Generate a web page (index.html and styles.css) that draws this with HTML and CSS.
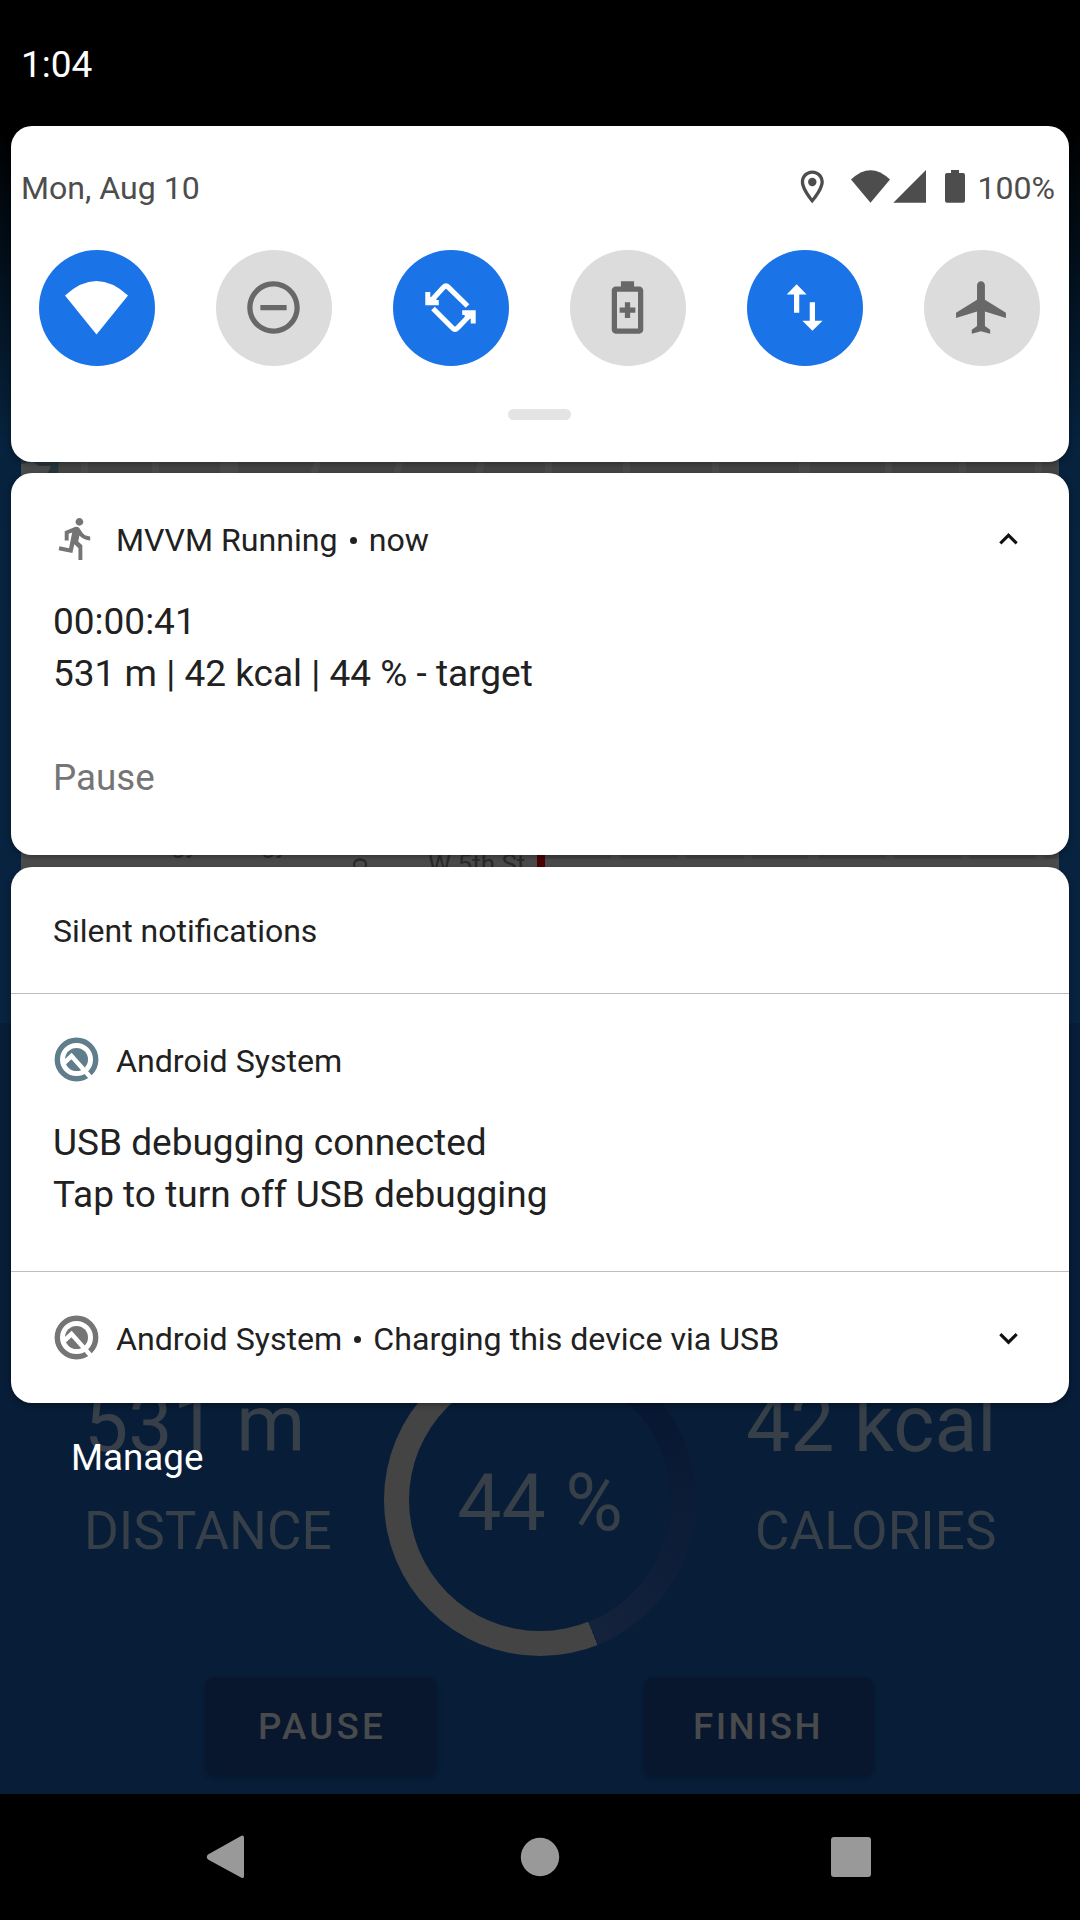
FILE: index.html
```html
<!DOCTYPE html>
<html lang="en">
<head>
<meta charset="utf-8">
<title>Notification shade</title>
<link rel="stylesheet" href="styles.css">
</head>
<body>
<div class="screen">
  <div class="app">
    <div class="map">
      <svg class="map-art" viewBox="0 0 1038 623" width="1038" height="623">
        <rect width="1038" height="623" fill="#454545"/>
        <g fill="#4c4c4c">
          <path d="M60 58h7v20h-7zM131 58h7v20h-7zM199 58h18v20h-18zM294 58h7l-6 20h-7zM377 58h7l-6 20h-7zM458 58h7l-5 20h-7zM524 58h7v20h-7zM602 58h7v20h-7zM691 58h7v20h-7zM778 58h11v20h-11zM864 58h7v20h-7zM938 58h7v20h-7zM1014 58h7v20h-7z"/>
          <path d="M0 459h1038v15H0zM0 450h516v12H0zM590 445h9v14h-9zM657 445h8v14h-8zM723 445h8v14h-8zM787 445h11v14h-11zM865 445h8v14h-8zM940 445h8v14h-8zM1015 445h8v14h-8z"/>
        </g>
        <path d="M0 50H36Q39 66 36 76H0z" fill="#29363d"/>
        <path d="M0 64L12 62L18 66L30 66L28 71L24 75H0z" fill="#4a4c4c"/>
        <rect x="516" y="440" width="8" height="34" fill="#4b0000"/>
        <g class="map-label">
          <text x="407" y="473">W 5th St</text>
          <text x="150" y="453">gy</text>
          <text x="240" y="453">gy</text>
          <text transform="translate(346 472) rotate(-90)">o</text>
        </g>
      </svg>
    </div>
    <div class="stats">
      <div class="stat stat-left"><div class="value">531 m</div><div class="label">DISTANCE</div></div>
      <div class="ring">
        <div class="ring-core">44 %</div>
      </div>
      <div class="stat stat-right"><div class="value">42 kcal</div><div class="label">CALORIES</div></div>
    </div>
    <div class="actions">
      <div class="action">PAUSE</div>
      <div class="action action-finish">FINISH</div>
    </div>
  </div>

  <div class="shade">
    <div class="clock">1:04</div>
    <section class="card quick">
      <div class="quick-top">
        <span class="date">Mon, Aug 10</span>
        <svg class="status-icons" viewBox="800 168 168 36" width="168" height="36" fill="#4d4d4d">
          <path fill-rule="evenodd" d="M813.3 170.5C806.8 170.5 801.8 175.600 801.8 182C801.8 190.5 813.3 203.300 813.3 203.300S824.800 190.500 824.800 182C824.800 175.600 819.800 170.500 813.300 170.500zM813.300 173.700C818 173.700 821.500 177.400 821.500 182C821.500 186.500 816.500 194 813.300 198.200C810.100 194 805.100 186.500 805.100 182C805.100 177.400 808.600 173.700 813.300 173.700z"/>
          <circle cx="813.300" cy="182" r="4.200"/>
          <path d="M852 179.500Q871.500 160.800 891 179.500L871.500 202.700z"/>
          <path d="M927 170V202.700H894.300z"/>
          <path d="M952 170h8v3h4q2 0 2 2v25.700q0 2-2 2h-16q-2 0-2-2V175q0-2 2-2h4z"/>
        </svg>
        <span class="percent">100%</span>
      </div>
      <div class="tiles">
        <div class="tile on"><svg viewBox="0 0 63 63" width="63" height="63"><path d="M0 19.500Q31.500-9.500 63 19.500L31.500 58.500z" fill="#fff"/></svg></div>
        <div class="tile"><svg viewBox="0 0 24 24" width="63" height="63" fill="#686868"><path d="M7 11h10v2H7zM12 2C6.480 2 2 6.480 2 12s4.480 10 10 10 10-4.480 10-10S17.520 2 12 2zm0 18c-4.410 0-8-3.590-8-8s3.590-8 8-8 8 3.590 8 8-3.590 8-8 8z"/></svg></div>
        <div class="tile on"><svg viewBox="0 0 63 63" width="63" height="63" fill="none" stroke="#fff" stroke-width="5.200"><path d="M12 25L24.500 11.300Q27 8.800 29.500 11.300L48.500 30M14 32.500L33.500 52Q36 54.500 38.500 52L53 37"/><path fill="#fff" stroke="none" d="M6.300 16h5v5l6 0v3h2.500v5.300H6.300zM56.700 47.500h-5V42.500l-6 0v-3.500h-2.500v-4.800h13.500z"/></svg></div>
        <div class="tile"><svg viewBox="0 0 24 24" width="63" height="63" fill="#686868"><path fill-rule="evenodd" d="M9.500 2h5v2h2c.8 0 1.500.7 1.500 1.500v15c0 .8-.7 1.500-1.500 1.500h-9c-.8 0-1.500-.7-1.500-1.500v-15C6 4.700 6.700 4 7.500 4h2zM8 6v14h8V6zM11 10h2v2h2v2h-2v2h-2v-2H9v-2h2z"/></svg></div>
        <div class="tile on"><svg viewBox="0 0 24 24" width="63" height="63" fill="#fff"><path d="M9.010 3.130L5.200 7H8v7h2V7h2.800zM16 17v-7h-2v7h-2.800l3.800 3.900 3.900-3.900z"/></svg></div>
        <div class="tile"><svg viewBox="0 0 24 24" width="63" height="63" fill="#686868"><path d="M21.300 16v-2l-8-5V3.500C13.300 2.670 12.630 2 11.800 2s-1.500.67-1.500 1.500V9l-8 5v2l8-2.500V19L8.300 20.500V22l3.500-1 3.500 1v-1.500L13.300 19v-5.500z"/></svg></div>
      </div>
      <div class="handle"></div>
    </section>

    <section class="card running">
      <div class="head">
        <svg class="app-icon" viewBox="0 0 24 24" width="47" height="47" fill="#757575"><path d="M13.490 5.480c1.100 0 2-.9 2-2s-.9-2-2-2-2 .9-2 2 .9 2 2 2zm-3.600 13.900l1-4.400 2.100 2v6h2v-7.500l-2.100-2 .6-3c1.300 1.500 3.300 2.500 5.500 2.500v-2c-1.900 0-3.500-1-4.300-2.400l-1-1.600c-.4-.6-1-1-1.700-1-.3 0-.5.1-.8.1l-5.200 2.200v4.700h2v-3.400l1.800-.7-1.600 8.100-4.900-1-.4 2 7 1.400z"/></svg>
        <span class="head-text">MVVM Running<i class="sep"></i>now</span>
        <svg class="chevron" viewBox="0 0 24 24" width="37" height="37"><path d="M12 8.500l-6 6 1.410 1.410L12 11.330l4.590 4.580L18 14.500z"/></svg>
      </div>
      <div class="body"><div>00:00:41</div><div>531 m | 42 kcal | 44 % - target</div></div>
      <div class="pause">Pause</div>
    </section>

    <section class="card silent">
      <div class="silent-title">Silent notifications</div>
      <div class="item item-usb">
        <div class="head">
          <svg class="app-icon q-teal" viewBox="0 0 47 47" width="47" height="47"><circle cx="23.500" cy="23.500" r="19.200" fill="none" stroke="currentColor" stroke-width="5.400"/><circle cx="23.500" cy="23.500" r="11.500" fill="currentColor"/><path d="M11 27L18.500 20L39 43" fill="none" stroke="#fff" stroke-width="4.500"/></svg>
          <span class="head-text">Android System</span>
        </div>
        <div class="body"><div>USB debugging connected</div><div>Tap to turn off USB debugging</div></div>
      </div>
      <div class="item">
        <div class="head">
          <svg class="app-icon q-grey" viewBox="0 0 47 47" width="47" height="47"><circle cx="23.500" cy="23.500" r="19.200" fill="none" stroke="currentColor" stroke-width="5.400"/><circle cx="23.500" cy="23.500" r="11.500" fill="currentColor"/><path d="M11 27L18.500 20L39 43" fill="none" stroke="#fff" stroke-width="4.500"/></svg>
          <span class="head-text">Android System<i class="sep"></i>Charging this device via USB</span>
          <svg class="chevron" viewBox="0 0 24 24" width="37" height="37"><path d="M16.590 9.090L12 13.670 7.410 9.090 6 10.500l6 6 6-6z"/></svg>
        </div>
      </div>
    </section>
    <div class="manage">Manage</div>
  </div>

  <nav class="nav">
    <svg viewBox="0 0 46 46" width="46" height="46"><path d="M39 2Q42 .500 42 4V42Q42 45 39 43.500L6 25.500Q3.500 23 6 20.500z"/></svg>
    <svg viewBox="0 0 46 46" width="46" height="46"><circle cx="25" cy="23" r="19.200"/></svg>
    <svg viewBox="0 0 46 46" width="46" height="46"><rect x="3" y="3" width="40" height="40" rx="3"/></svg>
  </nav>
</div>
</body>
</html>
```
FILE: styles.css
```css
* { box-sizing: border-box; }

body {
  margin: 0;
  background: #000;
  font-family: Roboto, sans-serif;
  font-size: 37px;
  color: #212121;
}

.screen {
  position: relative;
  display: flex;
  flex-direction: column;
  width: 1080px;
  height: 1920px;
  overflow: hidden;
}

/* dimmed application */
.app {
  height: 1794px;
  padding-top: 400px;
  background: linear-gradient(#000 126px, #06223c 440px, #08233f 700px, #08233f 1023px, #071d38 1023px);
}

.map {
  height: 623px;
  margin: 0 21px;
}

.map-art { display: block; }

.map-label {
  font-size: 26px;
  fill: #2b2b2b;
}

.stats {
  display: grid;
  grid-template-columns: 384px 312px 384px;
  padding-top: 321px;
  height: 654px;
  color: #373f48;
}

.stat {
  padding-top: 34px;
  white-space: nowrap;
}

.stat-left { padding-left: 84px; }
.stat-right { padding-left: 50px; }

.value {
  font-size: 78.75px;
  line-height: 92px;
}

.label {
  font-size: 53.1px;
  line-height: 62px;
  margin-top: 30px;
}

.stat-right .label { padding-left: 9px; }

.ring {
  display: flex;
  width: 312px;
  height: 312px;
  padding: 25px;
  border-radius: 50%;
  background: conic-gradient(#071330 0deg, #081833 60deg, #14223c 158.400deg, #444 158.400deg);
}

.ring-core {
  flex: 1;
  border-radius: 50%;
  background: #071d38;
  text-align: center;
  font-size: 78.75px;
  line-height: 268px;
}

.actions {
  display: grid;
  grid-template-columns: 232px 230px;
  column-gap: 207px;
  padding-left: 205px;
}

.action {
  height: 98px;
  padding-left: 2px;
  border-radius: 10px;
  background: #08172e;
  box-shadow: 0 3px 5px rgba(0, 0, 0, .2);
  color: #484a4c;
  font-size: 36.75px;
  font-weight: 500;
  letter-spacing: 3.200px;
  line-height: 100px;
  text-align: center;
}

.action-finish {
  padding: 0 2px 0 0;
  letter-spacing: 2.400px;
}

/* notification shade over the application */
.shade {
  position: absolute;
  inset: 0 0 126px;
  padding: 0 11px;
}

.clock {
  height: 126px;
  padding: 43px 0 0 10px;
  color: #fff;
  line-height: 43px;
}

.card {
  background: #fff;
  border-radius: 21px;
  box-shadow: 0 2px 6px rgba(0, 0, 0, .35);
}

.quick { height: 336px; }

.quick-top {
  display: flex;
  height: 84px;
  padding: 42px 14px 0 10px;
  color: #4d4d4d;
  font-size: 32.1px;
  line-height: 40px;
}

.status-icons {
  margin-left: auto;
}

.percent { margin-left: 10px; }

.tiles {
  display: flex;
  justify-content: space-between;
  padding: 40px 29px 0 28px;
}

.tile {
  display: grid;
  place-items: center;
  width: 116px;
  height: 116px;
  padding: 0 1px 2px 0;
  border-radius: 50%;
  background: #dcdcdc;
}

.tile.on { background: #1b73e8; }

.handle {
  width: 63px;
  height: 11px;
  margin: 43px auto 0 497px;
  border-radius: 6px;
  background: #e4e4e4;
}

.running {
  height: 382px;
  margin-top: 11px;
  padding-top: 42px;
}

.head {
  display: flex;
  align-items: center;
  height: 47px;
  padding: 0 42px 0 42px;
  font-size: 32.15px;
  line-height: 47px;
}

.head-text {
  display: flex;
  align-items: center;
  margin-left: 16px;
  padding-top: 3px;
}

.sep {
  width: 7px;
  height: 7px;
  margin: 0 12px;
  border-radius: 50%;
  background: #212121;
}

.chevron {
  margin-left: auto;
  fill: #111;
}

.body {
  padding: 34px 42px 0;
  line-height: 52px;
}

.pause {
  padding: 52px 42px 0;
  color: #757575;
  font-size: 36.75px;
  line-height: 52px;
}

.silent {
  height: 536px;
  margin-top: 12px;
}

.silent-title {
  height: 126px;
  padding-left: 42px;
  font-size: 32px;
  line-height: 128px;
}

.item {
  padding-top: 42px;
  border-top: 1px solid #bdbdbd;
}

.item-usb { height: 278px; }

.q-teal { color: #607d8b; }
.q-grey { color: #757575; }

.manage {
  padding: 33px 60px;
  color: #fff;
  font-size: 36.75px;
  line-height: 43px;
}

.nav {
  display: flex;
  justify-content: space-between;
  height: 126px;
  padding: 40px 206px 0 202px;
  fill: #999;
}
```
